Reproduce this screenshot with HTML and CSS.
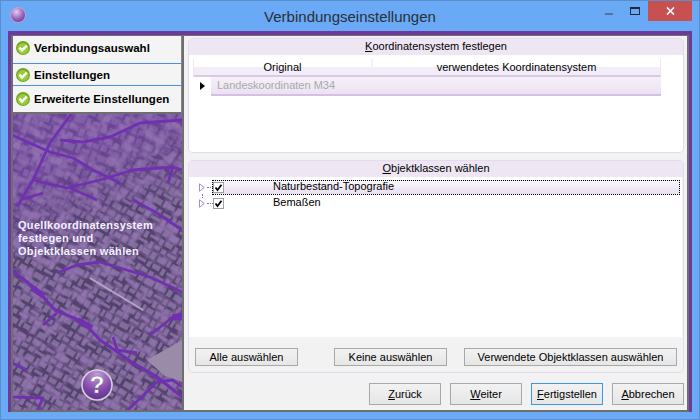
FILE: index.html
```html
<!DOCTYPE html>
<html lang="de">
<head>
<meta charset="utf-8">
<title>Verbindungseinstellungen</title>
<link rel="stylesheet" href="styles.css">
</head>
<body>
<svg class="defs" width="0" height="0">
  <defs>
    <symbol id="ok" viewBox="0 0 14 14">
      <circle cx="7" cy="7" r="7" fill="#6fa81a"/>
      <circle cx="7" cy="7.5" r="5.6" fill="#9acb3c"/>
      <path d="M3.4 6.6 L6 9.4 L10.8 4.6" fill="none" stroke="#fff" stroke-width="2.4"/>
    </symbol>
    <symbol id="cb" viewBox="0 0 11 11">
      <rect x=".5" y=".5" width="10" height="10" fill="#fff" stroke="#a0a0a0"/>
      <path d="M2.5 5.5 L4.5 8 L8.5 2.8" fill="none" stroke="#000" stroke-width="1.8"/>
    </symbol>
    <symbol id="tri" viewBox="0 0 6 9">
      <path d="M.5 .8 L5.2 4.5 L.5 8.2 Z" fill="#fff" stroke="#a98ad6"/>
    </symbol>
    <pattern id="blocksA" width="37" height="29" patternUnits="userSpaceOnUse" patternTransform="rotate(22)">
      <g fill="#7f5ca6">
        <rect x="1" y="1" width="9" height="5"/><rect x="12" y="2" width="5" height="7"/><rect x="19" y="1" width="11" height="4"/><rect x="32" y="1" width="4" height="6"/>
        <rect x="1" y="9" width="6" height="6"/><rect x="9" y="11" width="12" height="4"/><rect x="23" y="8" width="5" height="8"/><rect x="30" y="10" width="6" height="5"/>
        <rect x="2" y="19" width="11" height="7"/><rect x="15" y="18" width="4" height="8"/><rect x="21" y="19" width="8" height="3"/><rect x="31" y="18" width="5" height="9"/>
      </g>
    </pattern>
    <pattern id="blocksC" width="33" height="25" patternUnits="userSpaceOnUse" patternTransform="rotate(30)">
      <rect width="33" height="25" fill="#55416f"/>
      <g fill="#7e6e98">
        <rect x="1" y="1" width="8" height="5"/><rect x="11" y="1" width="4" height="7"/><rect x="17" y="2" width="9" height="3"/><rect x="28" y="1" width="4" height="6"/>
        <rect x="1" y="9" width="5" height="5"/><rect x="8" y="10" width="10" height="3"/><rect x="20" y="8" width="4" height="7"/><rect x="26" y="9" width="6" height="4"/>
        <rect x="2" y="17" width="9" height="6"/><rect x="13" y="16" width="3" height="7"/><rect x="18" y="17" width="7" height="5"/><rect x="27" y="16" width="5" height="7"/>
      </g>
    </pattern>
    <linearGradient id="fade" gradientUnits="userSpaceOnUse" x1="0" y1="190" x2="30" y2="260">
      <stop offset="0" stop-color="#000"/><stop offset="1" stop-color="#fff"/>
    </linearGradient>
    <mask id="lower" maskUnits="userSpaceOnUse" x="13" y="36" width="169" height="375">
      <rect x="13" y="36" width="169" height="375" fill="url(#fade)"/>
    </mask>
    <filter id="soft" x="0" y="0" width="100%" height="100%"><feGaussianBlur stdDeviation=".5"/></filter>
    <filter id="noise" x="0" y="0" width="100%" height="100%">
      <feTurbulence type="fractalNoise" baseFrequency=".09" numOctaves="2" seed="7"/>
      <feColorMatrix values="0 0 0 0 .3  0 0 0 0 .18  0 0 0 0 .45  3.2 0 0 0 -1.25"/>
    </filter>
    <radialGradient id="orb" cx=".4" cy=".3" r=".8">
      <stop offset="0" stop-color="#e4cdf2"/><stop offset=".55" stop-color="#9c66bf"/><stop offset="1" stop-color="#5f2f86"/>
    </radialGradient>
    <radialGradient id="help" cx=".5" cy=".15" r=".95">
      <stop offset="0" stop-color="#c39bd8"/><stop offset=".6" stop-color="#7d45a8"/><stop offset="1" stop-color="#5a2b86"/>
    </radialGradient>
  </defs>
</svg>
<div class="window">
  <header class="titlebar">
    <svg class="app-icon" width="16" height="16" viewBox="0 0 16 16"><circle cx="8" cy="8" r="7.5" fill="url(#orb)" stroke="#bba6c9"/></svg>
    <span class="title">Verbindungseinstellungen</span>
    <div class="controls">
      <span class="ctl"><svg width="8" height="2" class="min-i"><rect width="8" height="2" fill="#54739c"/></svg></span>
      <span class="ctl"><svg width="10" height="8"><rect x=".5" y="1" width="9" height="6.5" fill="none" stroke="#1d2a3b"/><rect x="0" y="0" width="10" height="2" fill="#1d2a3b"/></svg></span>
      <span class="ctl close"><svg width="9" height="8"><path d="M1 .5 L8 7.5 M8 .5 L1 7.5" stroke="#fff" stroke-width="1.7"/></svg></span>
    </div>
  </header>
  <div class="frame">
    <div class="client">
      <aside class="side">
        <svg class="map" width="169" height="375" viewBox="13 36 169 375">
          <g filter="url(#soft)">
            <rect x="13" y="36" width="169" height="375" fill="#6b4494"/>
            <rect x="13" y="36" width="169" height="375" fill="url(#blocksA)"/>
            <g mask="url(#lower)">
              <rect x="13" y="36" width="169" height="375" fill="url(#blocksC)"/>
            </g>
            <rect x="13" y="36" width="169" height="375" filter="url(#noise)" opacity=".8"/>
            <path d="M147 360 L182 340 V382 L165 376 Z" fill="#9a8ba8"/>
            <path d="M90 278 L143 310" stroke="#b5a8c4" stroke-width="1.6"/>
          </g>
          <g fill="none" stroke="#7130b2" stroke-width="2.8" stroke-linejoin="round">
            <path d="M12 135 L50 152 L73 158 L93 170 L120 183"/>
            <path d="M72 113 L50 143 L33 180 L17 207"/>
            <path d="M60 140 L83 142 L110 137 L140 123 L182 120"/>
            <path d="M33 180 L67 188 L100 180 L133 170 L173 167 L182 170"/>
            <path d="M173 167 L168 183"/>
            <path d="M20 200 L43 193"/>
            <path d="M70 188 L97 200"/>
            <path d="M12 270 L37 290 L55 310 L83 322 L100 340 L133 363 L157 377 L182 397" stroke-width="3.2"/>
            <path d="M57 273 L77 265 L100 262 L150 277 L182 292"/>
            <path d="M133 200 L157 213 L182 230"/>
            <path d="M150 335 L173 317 L182 313"/>
            <path d="M43 325 L57 313"/>
            <path d="M113 337 L117 350 L137 353"/>
            <path d="M12 363 L27 370"/>
            <path d="M12 397 L43 398 L37 411"/>
            <path d="M127 411 L157 382 L173 380 L182 387"/>
          </g>
          <path d="M172 317 H182 M32 288 L44 296 M78 320 L92 328" stroke="#7130b2" stroke-width="6" fill="none"/>
        </svg>
        <ul class="steps">
          <li class="step first"><svg class="ok" width="14" height="14"><use href="#ok"/></svg>Verbindungsauswahl</li>
          <li class="step mid"><svg class="ok" width="14" height="14"><use href="#ok"/></svg>Einstellungen</li>
          <li class="step"><svg class="ok" width="14" height="14"><use href="#ok"/></svg>Erweiterte Einstellungen</li>
        </ul>
        <p class="desc">Quellkoordinatensystem festlegen und Objektklassen wählen</p>
        <svg class="help" width="32" height="32" viewBox="0 0 32 32">
          <circle cx="16" cy="16" r="15" fill="url(#help)" stroke="#d5d0d5" stroke-width="1.6"/>
          <text x="16" y="24" class="help-q">?</text>
        </svg>
      </aside>
      <main class="main">
        <section class="group g1">
          <h2 class="ghead"><u>K</u>oordinatensystem festlegen</h2>
          <div class="gbody">
            <div class="thead">
              <div class="th c1">Original</div>
              <div class="th">verwendetes Koordinatensystem</div>
            </div>
            <div class="trow">
              <span class="rowmark"></span>
              <div class="td">Landeskoordinaten M34</div>
            </div>
          </div>
        </section>
        <section class="group g2">
          <h2 class="ghead"><u>O</u>bjektklassen wählen</h2>
          <div class="gbody tree">
            <div class="node sel">
              <svg class="tri" width="6" height="9"><use href="#tri"/></svg><span class="dots"></span>
              <svg class="cb" width="11" height="11"><use href="#cb"/></svg>
              <span class="lbl">Naturbestand-Topografie</span>
            </div>
            <div class="node">
              <svg class="tri" width="6" height="9"><use href="#tri"/></svg><span class="dots"></span>
              <svg class="cb" width="11" height="11"><use href="#cb"/></svg>
              <span class="lbl">Bemaßen</span>
            </div>
          </div>
          <div class="gbtns">
            <button class="btn b-all">Alle auswählen</button>
            <button class="btn b-none">Keine auswählen</button>
            <button class="btn b-used">Verwendete Objektklassen auswählen</button>
          </div>
        </section>
        <footer class="foot">
          <button class="btn nav"><u>Z</u>urück</button>
          <button class="btn nav"><u>W</u>eiter</button>
          <button class="btn nav def"><u>F</u>ertigstellen</button>
          <button class="btn nav"><u>A</u>bbrechen</button>
        </footer>
      </main>
    </div>
  </div>
</div>
</body>
</html>
```
FILE: styles.css
```css
* { box-sizing: border-box; }
html, body { margin: 0; padding: 0; }
body { width: 700px; height: 420px; overflow: hidden; font-family: "Liberation Sans", Arial, sans-serif; font-size: 11px; color: #000; }
.defs { position: absolute; }
.window { width: 700px; height: 420px; background: #69a9f5; border: 1px solid #5a8ec9; display: flex; flex-direction: column; padding: 0 7px 7px; }
.titlebar { height: 30px; flex: none; display: flex; align-items: flex-start; position: relative; margin: 0 -7px; padding-left: 9px; }
.app-icon { margin-top: 6px; }
.title { position: absolute; left: 0; right: 0; top: 6px; text-align: center; font-size: 15px; line-height: 19px; color: #2a2f38; }
.controls { margin-left: auto; display: flex; margin-right: 7px; }
.ctl { width: 26px; height: 20px; display: flex; align-items: center; justify-content: center; }
.ctl:nth-child(1) svg { margin-top: 6px; }
.ctl.close { width: 44px; background: #c75050; }
.frame { flex: 1; background: #6d3a9c; padding: 4px 3px 0 3px; display: flex; min-height: 0; }
.client { flex: 1; display: flex; background: #f2f2f2; border: 2px solid #6e6e6e; border-top-width: 1px; min-width: 0; }
.side { width: 169px; flex: none; position: relative; display: flex; flex-direction: column; overflow: hidden; background: #5a3c82; }
.map { position: absolute; left: 0; top: 0; }
.steps { position: relative; list-style: none; margin: 0; padding: 0; height: 78px; background: #f4f4f4; border-bottom: 2px solid #6e6e6e; border-right: 1px solid #888; }
.step { height: 26px; display: flex; align-items: center; font-weight: bold; font-size: 11.5px; letter-spacing: .05px; padding-left: 3px; gap: 4px; white-space: nowrap; }
.step.first { height: 27px; padding-bottom: 3px; }
.step.mid { height: 23px; border-top: 1px solid #4a90e2; border-bottom: 1px solid #4a90e2; }
.ok { flex: none; }
.desc { position: relative; margin: 105px 0 0 5px; width: 146px; color: #f4f0ff; font-weight: bold; font-size: 11px; letter-spacing: .3px; line-height: 13px; }
.help { position: absolute; left: 68px; top: 333px; }
.help-q { font: bold 24px "Liberation Sans", sans-serif; fill: #fff; stroke: #777; stroke-width: .4px; text-anchor: middle; }
.main { flex: 1; min-width: 0; display: flex; flex-direction: column; padding: 2px 3px 0 4px; border-left: 2px solid #6e6e6e; }
.group { border: 1px solid #e5d8ef; border-radius: 5px; background: #f2f2f2; overflow: hidden; display: flex; flex-direction: column; flex: none; }
.g1 { height: 115px; }
.g2 { height: 213px; margin-top: 7px; }
.ghead { margin: 0; height: 16px; flex: none; background: #efe6f4; font-size: 11px; font-weight: normal; line-height: 15px; text-align: center; }
.gbody { flex: 1; background: #fff; min-height: 0; padding: 4px 0 0 4px; }
.thead { width: 468px; height: 18px; display: flex; background: linear-gradient(#fff 0 8px, #f2edf7 8px); border-bottom: 2px solid #dac8e6; border-left: 1px solid #eee7f3; border-right: 1px solid #eee7f3; }
.th { flex: 1; text-align: center; line-height: 16px; }
.th.c1 { flex: none; width: 179px; border-right: 2px solid #f4eff8; }
.trow { display: flex; height: 19px; width: 468px; }
.rowmark { width: 18px; flex: none; position: relative; }
.rowmark::after { content: ""; position: absolute; left: 7px; top: 5px; border-left: 5px solid #000; border-top: 4.5px solid transparent; border-bottom: 4.5px solid transparent; }
.td { flex: 1; background: linear-gradient(#f6f1f9, #ece2f2); border-bottom: 2px solid #d6bfe4; color: #a9a9a9; padding-left: 6px; line-height: 16px; }
.tree { padding: 3px 2px 0 10px; background: #fff; height: 160px; flex: none; margin-right: 1px; position: relative; z-index: 0; }
.node { height: 16px; display: flex; align-items: center; position: relative; }
.node.sel { height: 15px; }
.node.sel::before { content: ""; position: absolute; left: 13px; right: 0; top: 0; bottom: 0; z-index: -1; background: linear-gradient(#faf7fc, #e9dff0); border: 1px dotted #000; }
.node + .node::before { content: ""; position: absolute; left: 3px; top: -1px; height: 4px; border-left: 1px dotted #8a6cc0; }
.tri { flex: none; }
.dots { width: 6px; height: 1px; margin-left: 2px; flex: none; border-top: 1px dotted #8a6cc0; }
.cb { flex: none; }
.lbl { margin-left: 49px; line-height: 13px; position: relative; top: -1px; }
.btn { font: 11px "Liberation Sans", Arial, sans-serif; color: #000; height: 18px; padding: 0; background: linear-gradient(#f2f2f2, #e6e6e6); border: 1px solid #a8a8a8; }
.gbtns { flex: 1; display: flex; align-items: flex-start; padding: 11px 6px 0 6px; }
.b-all { width: 103px; }
.b-none { width: 113px; margin-left: 36px; }
.b-used { width: 213px; margin-left: 17px; }
.foot { display: flex; justify-content: flex-end; gap: 9px; padding: 10px 0 0; }
.btn.nav { width: 72px; height: 22px; }
.btn.def { border-color: #3f96e6; }
```
